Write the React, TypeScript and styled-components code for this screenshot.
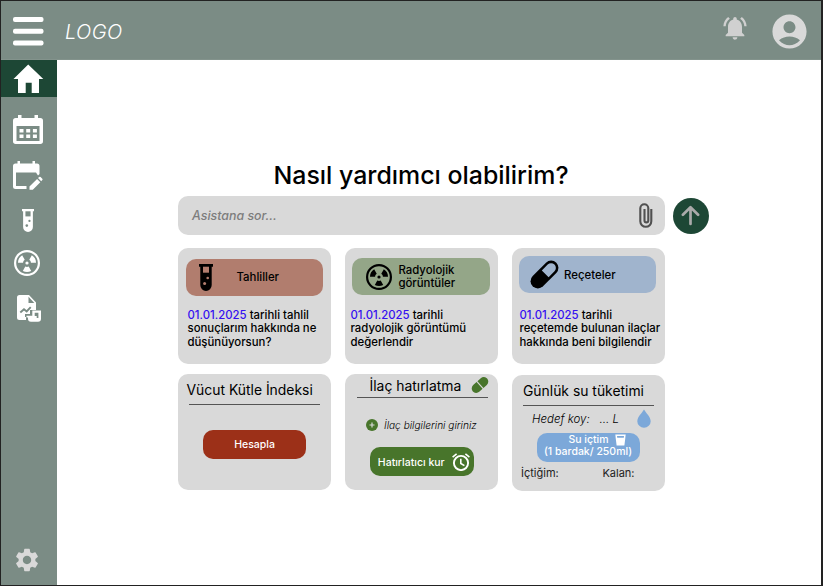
import React from 'react';
import styled, { createGlobalStyle, css } from 'styled-components';
import { MdSettings, MdAccountCircle, MdNotificationsActive } from 'react-icons/md';

const GlobalStyle = createGlobalStyle`
  * { box-sizing: border-box; }
  body { margin: 0; background: #fff; font-family: Inter, "Liberation Sans", sans-serif; color: #000; }
  button { font: inherit; border: 0; padding: 0; margin: 0; background: none; color: inherit; cursor: pointer; }
  svg { display: block; flex: none; }
`;

const Frame = styled.div`
  width: 823px;
  height: 586px;
  display: flex;
  flex-direction: column;
  overflow: hidden;
  border: 1px solid #222;
  border-right-width: 2px;
  background: #fff;
`;

const Header = styled.header`
  height: 59px;
  flex: none;
  display: flex;
  align-items: flex-start;
  background: #7b8c85;
  border-bottom: 1px solid #83938c;
`;

const MenuButton = styled.button`
  margin: 15px 0 0 12px;
`;

const Logo = styled.div`
  margin: 19px 0 0 21px;
  font-size: 20px;
  line-height: 24px;
  font-style: italic;
  font-weight: 300;
  letter-spacing: 0.4px;
  color: #fff;
`;

const HeaderActions = styled.div`
  margin-left: auto;
  display: flex;
  align-items: flex-start;
  color: #d0d0d0;
`;

const BellButton = styled.button`
  margin: 13px 20px 0 0;
`;

const ProfileButton = styled.button`
  margin: 9.5px 11px 0 0;
  color: #d9d9d9;
`;

const Body = styled.div`
  flex: 1;
  min-height: 0;
  display: flex;
`;

const Sidebar = styled.nav`
  width: 56px;
  flex: none;
  display: flex;
  flex-direction: column;
  align-items: flex-start;
  background: #7b8c85;
  color: #fff;
`;

const HomeItem = styled.button`
  width: 56px;
  height: 37px;
  padding: 1px 0 0 11.5px;
  background: #1d4735;
`;

const NavItem = styled.button<{ $top: number; $left: number }>`
  margin: ${p => p.$top}px 0 0 ${p => p.$left}px;
`;

const SettingsItem = styled.button`
  margin: auto 0 11px 12.4px;
  color: #d9d9d9;
`;

const Main = styled.main`
  flex: 1;
  padding: 99px 0 0 121px;
`;

const Title = styled.h1`
  width: 486px;
  height: 32px;
  margin: 0;
  text-align: center;
  white-space: nowrap;
  font-size: 24.9px;
  line-height: 32px;
  font-weight: 500;
`;

const SearchRow = styled.div`
  display: flex;
  align-items: center;
  gap: 8px;
  margin-top: 5px;
`;

const SearchBox = styled.div`
  width: 486.5px;
  height: 39px;
  display: flex;
  align-items: center;
  justify-content: space-between;
  padding: 0 11.5px 0 14px;
  border-radius: 10px;
  background: #d9d9d9;
  font-size: 12.4px;
  font-style: italic;
  font-weight: 500;
  color: #7d7d7d;
`;

const SendButton = styled.button`
  width: 36px;
  height: 36px;
  display: grid;
  place-items: center;
  border-radius: 50%;
  background: #1d4735;
`;

const Grid = styled.div`
  display: grid;
  grid-template-columns: repeat(3, 153px);
  gap: 11px 14px;
  margin-top: 13px;
`;

const Card = styled.section<{ $shift?: number }>`
  height: 116px;
  margin-top: ${p => p.$shift ?? 0}px;
  border-radius: 10px;
  background: #d9d9d9;
  display: flex;
  flex-direction: column;
`;

const TopicButton = styled.button<{ $color: string; $top: number; $left: number; $gap: number; $pad: number }>`
  width: 137.5px;
  height: 37px;
  flex: none;
  margin: ${p => p.$top}px 0 0 ${p => p.$left}px;
  padding-left: ${p => p.$pad}px;
  display: flex;
  align-items: center;
  gap: ${p => p.$gap}px;
  text-align: left;
  border-radius: 10px;
  background: ${p => p.$color};
  font-size: 11.4px;
  line-height: 13.5px;
  font-weight: 500;
`;

const TopicLabel = styled.span`
  padding-top: 1px;
`;

const Prompt = styled.p<{ $left: number }>`
  margin: auto 0 14.4px ${p => p.$left}px;
  white-space: nowrap;
  font-size: 11.38px;
  line-height: 13.7px;
  font-weight: 500;
`;

const DateText = styled.span`
  color: #3510f0;
`;

const CardTitle = styled.h2<{ $top: number; $left: number }>`
  display: flex;
  margin: ${p => p.$top}px 0 0 ${p => p.$left}px;
  white-space: nowrap;
  font-size: 13.9px;
  line-height: 16px;
  height: 16px;
  flex: none;
  font-weight: 400;
`;

const Rule = styled.div<{ $top: number; $left: number }>`
  width: 130.5px;
  height: 1px;
  flex: none;
  margin: ${p => p.$top}px 0 0 ${p => p.$left}px;
  background: #555;
`;

const action = css`
  display: flex;
  align-items: center;
  justify-content: center;
  flex: none;
  height: 29px;
  border-radius: 10px;
  color: #fff;
  font-size: 10.5px;
  font-weight: 500;
  white-space: nowrap;
`;

const CalculateButton = styled.button`
  ${action}
  width: 103px;
  margin: 25px 0 0 25px;
  background: #9c3018;
`;

const ReminderButton = styled.button`
  ${action}
  width: 104px;
  margin: 15.5px 0 0 25px;
  padding-left: 4px;
  gap: 7.5px;
  background: #48752b;
`;

const ReminderLabel = styled.span`
  padding-top: 2px;
`;

const DrankButton = styled.button`
  ${action}
  width: 103px;
  margin: 4px 0 0 24.5px;
  padding-bottom: 1.5px;
  flex-direction: column;
  background: #7ca8d9;
  font-size: 10.5px;
  line-height: 12.2px;
`;

const DrankLine = styled.span`
  display: flex;
  gap: 6px;
  padding-left: 18px;
`;

const MedicineHint = styled.div`
  display: flex;
  align-items: center;
  gap: 6px;
  margin: 21px 0 0 21px;
  height: 13px;
  flex: none;
  font-size: 10.15px;
  line-height: 13px;
  font-style: italic;
  font-weight: 300;
  white-space: nowrap;
`;

const PillSlot = styled.span`
  margin: -1.5px 0 0 10px;
`;

const GoalRow = styled.div`
  display: flex;
  height: 20px;
  flex: none;
  margin: 3px 0 0 20px;
  font-size: 11.5px;
  line-height: 20px;
  font-style: italic;
  font-weight: 300;
  white-space: pre;
`;

const DropSlot = styled.span`
  margin-left: 18px;
`;

const Totals = styled.div`
  display: flex;
  justify-content: space-between;
  padding: 4.5px 30.5px 0 9px;
  font-size: 11px;
  line-height: 15px;
  color: #222;
`;

const MenuIcon = () => (
  <svg width="31" height="31" viewBox="0 0 31 31" fill="#fff">
    <rect y="1" width="30.5" height="5" rx="2" />
    <rect y="12.7" width="30.5" height="5" rx="2" />
    <rect y="24.5" width="30.5" height="5" rx="2" />
  </svg>
);

const HomeIcon = () => (
  <svg width="31" height="30" viewBox="0 0 31 30" fill="#fff">
    <path d="M15.2 0.5 30.3 15H26v14h-7.3V18.7h-6V29H5V15H.5Z" />
  </svg>
);

const CalendarIcon = () => (
  <svg width="31" height="30" viewBox="0 0 31 30">
    <path fill="#fff" d="M5 0h3.5v3h13V0H25v3h2.3A2.7 2.7 0 0 1 30 5.7v20.600a2.7 2.7 0 0 1-2.7 2.7H2.7A2.7 2.7 0 0 1 0 26.3V5.7A2.7 2.7 0 0 1 2.7 3H5Z" />
    <path fill="#7b8c85" d="M3.500 11h23v15h-23Z" />
    <path fill="#fff" d="M6.5 14h4v3.500h-4Zm6.700 0h4v3.500h-4Zm6.700 0h4v3.500h-4ZM6.500 19.500h4V23h-4Zm6.700 0h4V23h-4Zm6.700 0h4V23h-4Z" />
  </svg>
);

const CalendarEditIcon = () => (
  <svg width="31" height="31" viewBox="0 0 31 31" fill="#fff">
    <path d="M4.5 0H7v2.5h12.5V0H22v2.5h2A2.5 2.5 0 0 1 26.5 5v8L25 14.5 23 11.5H3V25h10.5v3H2.5A2.5 2.5 0 0 1 0 25.5V5a2.5 2.5 0 0 1 2.5-2.5H4.5Z" />
    <path d="m16.5 25.500 7.600-7.500 3.200 3.200-7.500 7.500h-3.300ZM25 17.100l1.200-1.100a1 1 0 0 1 1.400 0l1.700 1.700a1 1 0 0 1 0 1.400l-1.100 1.200Z" />
  </svg>
);

const TubeIcon = ({ width, height, hole }: { width: number; height: number; hole: string }) => (
  <svg width={width} height={height} viewBox="0 0 14 27" preserveAspectRatio="none">
    <path fill="currentColor" d="M0 0h14v2.700h-1.300V21a5.700 6 0 0 1-11.400 0V2.700H0Z" />
    <path fill={hole} d="M4 2.700h6v6H4Z" />
    <circle cx="8.7" cy="14" r="1.3" fill={hole} />
    <circle cx="5.6" cy="19.5" r="1.5" fill={hole} />
  </svg>
);

const BLADE = 'm11.300 16.600-2.500 4.400a9 9 0 0 0 8.400 0l-2.500-4.400a3.600 3.600 0 0 1-3.400 0Z';

const RadiationIcon = () => (
  <svg width="26" height="26" viewBox="0 0 26 26" fill="currentColor">
    <circle cx="13" cy="13" r="11.9" fill="none" stroke="currentColor" strokeWidth="2.2" />
    <circle cx="13" cy="13" r="1.6" />
    <path d={BLADE} />
    <path transform="rotate(120 13 13)" d={BLADE} />
    <path transform="rotate(240 13 13)" d={BLADE} />
  </svg>
);

const ReportIcon = () => (
  <svg width="25" height="28" viewBox="0 0 25 28">
    <path fill="#fff" d="M2.500 0H12l7 7.500V15h-6v5H9v5H2.500A2.500 2.500 0 0 1 0 22.500v-20A2.500 2.500 0 0 1 2.500 0Z" />
    <path fill="#7b8c85" d="M11.500 1.700 17.300 8h-5.800Z" />
    <path fill="none" stroke="#7b8c85" strokeWidth="1.9" d="m3.300 17.500 3.700-3.300 2.700 2.300 4-4.300" />
    <path fill="#7b8c85" d="M8 19h6v3H8Z" />
    <path fill="#fff" d="M9.500 20.700h5.800V15.500h8.700v8.300a3 3 0 0 1-3 3h-7a3 3 0 0 1-3-3v-1.200H9.500Z" />
    <path fill="#7b8c85" d="M17.700 17.700h3.700v5.200h-1.700v-2h-2Z" />
  </svg>
);

const ClipIcon = () => (
  <svg width="14" height="25" viewBox="0 0 14 25" fill="none" stroke="#505050" strokeWidth="2.1">
    <path d="M12.300 6v12.300a5.500 5.500 0 0 1-11 0V5.300a4 4 0 0 1 8 0v12.200a1.900 1.900 0 0 1-3.800 0V6" />
  </svg>
);

const ArrowIcon = () => (
  <svg width="19" height="21" viewBox="0 0 19 21" fill="none" stroke="#aaa" strokeWidth="2.7" strokeLinecap="round" strokeLinejoin="round">
    <path d="M9.500 19V2.500M1.900 9.800l7.600-7.600 7.600 7.600" />
  </svg>
);

const CapsuleIcon = () => (
  <svg width="29" height="29" viewBox="0 0 29 29">
    <g transform="rotate(45 14.5 14.5)">
      <rect x="7.2" y="-2.2" width="14.6" height="33.4" rx="7.3" fill="#000" />
      <path fill="#a0b4cd" d="M9.700 13.500V5.200a4.800 4.800 0 0 1 9.600 0v8.300Z" />
    </g>
  </svg>
);

const PillIcon = () => (
  <svg width="18" height="18" viewBox="0 0 18 18">
    <g transform="rotate(48 9 9)" fill="#48752b">
      <path d="M4.500 8.400V3.900a4.500 4.500 0 0 1 9 0v4.500ZM4.500 9.600v4.500a4.500 4.500 0 0 0 9 0V9.600Z" />
    </g>
  </svg>
);

const PlusIcon = () => (
  <svg width="12" height="12" viewBox="0 0 12 12">
    <circle cx="6" cy="6" r="6" fill="#48752b" />
    <path d="M6 3.500v5M3.500 6h5" stroke="#d9d9d9" strokeWidth="1.2" />
  </svg>
);

const AlarmIcon = () => (
  <svg width="18" height="18" viewBox="0 0 18 18" fill="none" stroke="#fff" strokeWidth="1.9">
    <circle cx="9" cy="10" r="7.1" />
    <path d="M.6 4.200 4.600.900M17.400 4.200l-4-3.300M8.800 5.700v4.800l3.600 2.100" strokeWidth="1.6" />
  </svg>
);

const DropIcon = () => (
  <svg width="14" height="19" viewBox="0 0 14 19" fill="#7ca8d9">
    <path d="M7 .5C9 4 13.700 8 13.700 12.200a6.700 6.500 0 0 1-13.400 0C.3 8 5 4 7 .5Z" />
  </svg>
);

const GlassIcon = () => (
  <svg width="11" height="12" viewBox="0 0 11 12">
    <path fill="#fff" d="M.3.500h10.400L9.400 11.500H1.600Z" />
    <path fill="#7ca8d9" d="M2 2h7l-.2 1.700H2.200Z" />
  </svg>
);

export default function App() {
  return (
    <>
      <GlobalStyle />
      <Frame>
        <Header>
          <MenuButton><MenuIcon /></MenuButton>
          <Logo>LOGO</Logo>
          <HeaderActions>
            <BellButton><MdNotificationsActive size={28} /></BellButton>
            <ProfileButton><MdAccountCircle size={41} /></ProfileButton>
          </HeaderActions>
        </Header>
        <Body>
          <Sidebar>
            <HomeItem><HomeIcon /></HomeItem>
            <NavItem $top={18} $left={12}><CalendarIcon /></NavItem>
            <NavItem $top={16} $left={12}><CalendarEditIcon /></NavItem>
            <NavItem $top={17} $left={21}><TubeIcon width={12} height={23} hole="#7b8c85" /></NavItem>
            <NavItem $top={18} $left={13.4}><RadiationIcon /></NavItem>
            <NavItem $top={19} $left={16}><ReportIcon /></NavItem>
            <SettingsItem><MdSettings size={28} /></SettingsItem>
          </Sidebar>
          <Main>
            <Title>Nasıl yardımcı olabilirim?</Title>
            <SearchRow>
              <SearchBox>Asistana sor...<ClipIcon /></SearchBox>
              <SendButton><ArrowIcon /></SendButton>
            </SearchRow>
            <Grid>
              <Card>
                <TopicButton $color="#b17d6e" $top={11} $left={7.5} $pad={13.5} $gap={23.5}>
                  <TubeIcon width={14} height={27} hole="#b17d6e" /><TopicLabel>Tahliller</TopicLabel>
                </TopicButton>
                <Prompt $left={9.5}><DateText>01.01.2025</DateText> tarihli tahlil<br />sonuçlarım hakkında ne<br />düşünüyorsun?</Prompt>
              </Card>
              <Card>
                <TopicButton $color="#94a688" $top={10} $left={7.4} $pad={13.5} $gap={6.5}>
                  <RadiationIcon /><TopicLabel>Radyolojik<br />görüntüler</TopicLabel>
                </TopicButton>
                <Prompt $left={5.5}><DateText>01.01.2025</DateText> tarihli<br />radyolojik görüntümü<br />değerlendir</Prompt>
              </Card>
              <Card>
                <TopicButton $color="#a0b4cd" $top={8.4} $left={6.5} $pad={11} $gap={5.5}>
                  <CapsuleIcon /><TopicLabel>Reçeteler</TopicLabel>
                </TopicButton>
                <Prompt $left={7.5}><DateText>01.01.2025</DateText> tarihli<br />reçetemde bulunan ilaçlar<br />hakkında beni bilgilendir</Prompt>
              </Card>
              <Card $shift={-0.6}>
                <CardTitle $top={7.5} $left={8.5}>Vücut Kütle İndeksi</CardTitle>
                <Rule $top={6} $left={11} />
                <CalculateButton>Hesapla</CalculateButton>
              </Card>
              <Card $shift={-1.5}>
                <CardTitle $top={4} $left={24.5}>İlaç hatırlatma<PillSlot><PillIcon /></PillSlot></CardTitle>
                <Rule $top={3} $left={12} />
                <MedicineHint><PlusIcon />İlaç bilgilerini giriniz</MedicineHint>
                <ReminderButton><ReminderLabel>Hatırlatıcı kur</ReminderLabel><AlarmIcon /></ReminderButton>
              </Card>
              <Card>
                <CardTitle $top={7.5} $left={11}>Günlük su tüketimi</CardTitle>
                <Rule $top={6} $left={11} />
                <GoalRow>Hedef koy:   ... L<DropSlot><DropIcon /></DropSlot></GoalRow>
                <DrankButton>
                  <DrankLine>Su içtim<GlassIcon /></DrankLine>
                  <span>(1 bardak/ 250ml)</span>
                </DrankButton>
                <Totals><span>İçtiğim:</span><span>Kalan:</span></Totals>
              </Card>
            </Grid>
          </Main>
        </Body>
      </Frame>
    </>
  );
}
